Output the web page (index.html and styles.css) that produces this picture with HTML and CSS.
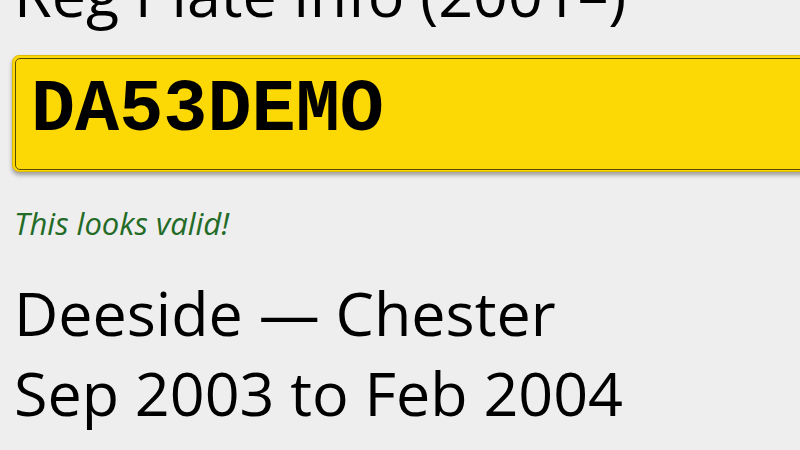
FILE: index.html
```html
<!DOCTYPE html>
<html>
<head>
<meta charset="utf-8">
<link rel="stylesheet" href="styles.css">
</head>
<body>
<main class="page">
  <h1 class="title">Reg Plate Info (2001–)</h1>
  <div class="plate">
    <div class="plate-inner">DA53DEMO</div>
  </div>
  <p class="status">This looks valid!</p>
  <div class="result">
    <div class="line">Deeside — Chester</div>
    <div class="line">Sep 2003 to Feb 2004</div>
  </div>
</main>
</body>
</html>
```
FILE: styles.css
```css
html, body {
  margin: 0;
  padding: 0;
  background: #eeeeee;
  overflow: hidden;
}
.page {
  width: 800px;
  height: 450px;
  padding-left: 14px;
  box-sizing: border-box;
  font-family: "Open Sans", sans-serif;
  color: #000;
  overflow: hidden;
}
.title {
  margin: -48px 0 0 0;
  font-size: 61px;
  font-weight: 400;
  line-height: 83px;
  white-space: nowrap;
}
.plate {
  margin: 20px 0 0 -2px;
  width: 820px;
  height: 117px;
  box-sizing: border-box;
  background: #fcd805;
  border: 1px solid #e0bc00;
  border-radius: 7px;
  padding: 1.5px 2px;
  box-shadow: 0 3px 4px rgba(0,0,0,0.35);
}
.plate-inner {
  height: 100%;
  box-sizing: border-box;
  border: 1.5px solid #5a4a00;
  border-radius: 5px;
  font-family: "Liberation Mono", monospace;
  font-weight: 700;
  font-size: 73.5px;
  line-height: 104px;
  padding-left: 15px;
}
.status {
  margin: 30px 0 0 0;
  font-style: italic;
  font-size: 31px;
  line-height: 42px;
  color: #236b26;
}
.result {
  margin-top: 29px;
}
.line {
  font-size: 61px;
  line-height: 80px;
  white-space: nowrap;
}
```
